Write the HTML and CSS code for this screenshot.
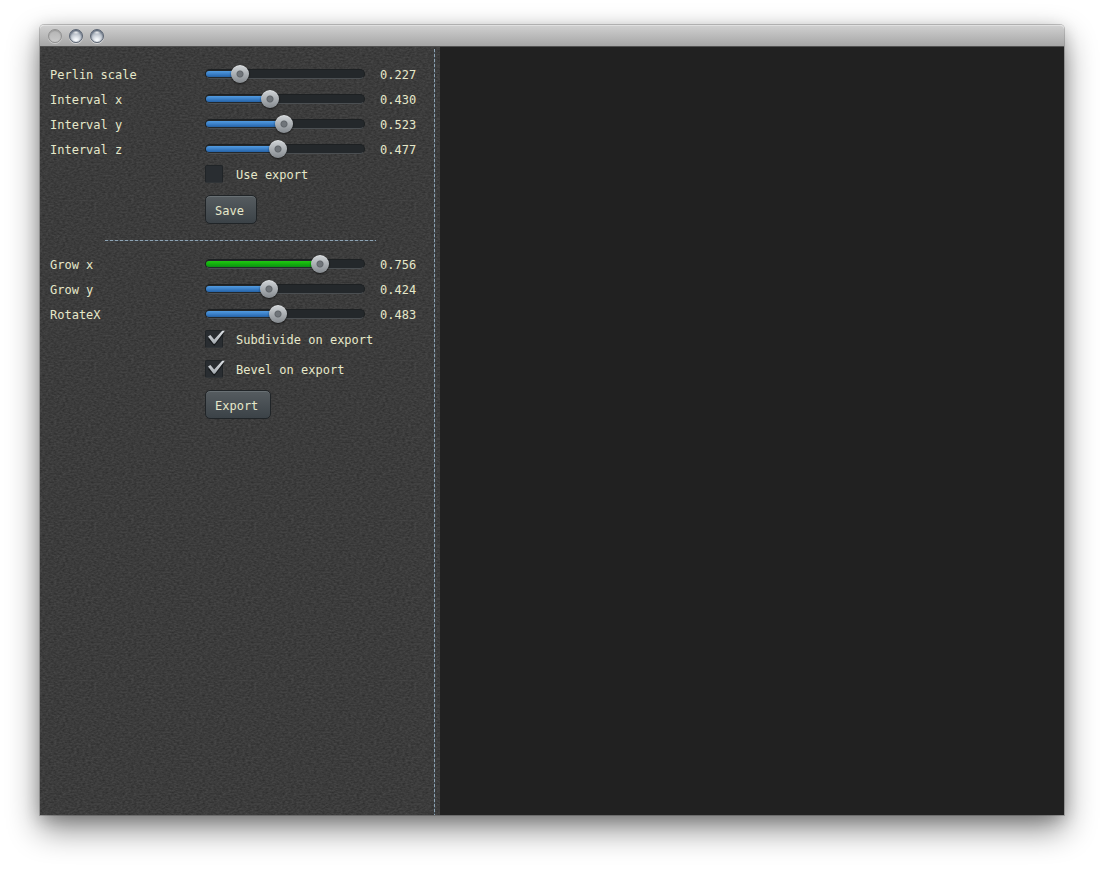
FILE: index.html
```html
<!DOCTYPE html>
<html lang="en">
<head>
<meta charset="utf-8">
<title>Export settings</title>
<link rel="stylesheet" href="styles.css">
</head>
<body>
<svg class="defs" aria-hidden="true">
  <defs>
    <linearGradient id="metal" x1="0" y1="0" x2="0" y2="1"><stop offset="0" stop-color="#dde1e5"/><stop offset="1" stop-color="#a3a9af"/></linearGradient>
    <symbol id="tick" viewBox="0 0 20 16"><path d="M4.200 7.200 9.200 12.600 17.800 1.800" fill="none" stroke="#15181a" stroke-width="3" transform="translate(0 1)"/><path d="M3 6.400 5.400 5 9.200 9.600 17.200.8 19.800.8 9.900 13.800 8.500 13.800Z" fill="url(#metal)"/></symbol>
  </defs>
</svg>
<div class="window">
  <header class="titlebar">
    <button class="light off" type="button" aria-label="Close"></button>
    <button class="light" type="button" aria-label="Minimize"></button>
    <button class="light" type="button" aria-label="Zoom"></button>
  </header>
  <div class="content">
    <aside class="panel">
      <form class="controls">
        <div class="row"><label for="perlin">Perlin scale</label><span class="slider" style="--value:0.227"><span class="fill"></span><input id="perlin" type="range" min="0" max="1" step="0.001" value="0.227"></span><output for="perlin">0.227</output></div>
        <div class="row"><label for="ix">Interval x</label><span class="slider" style="--value:0.430"><span class="fill"></span><input id="ix" type="range" min="0" max="1" step="0.001" value="0.430"></span><output for="ix">0.430</output></div>
        <div class="row"><label for="iy">Interval y</label><span class="slider" style="--value:0.523"><span class="fill"></span><input id="iy" type="range" min="0" max="1" step="0.001" value="0.523"></span><output for="iy">0.523</output></div>
        <div class="row"><label for="iz">Interval z</label><span class="slider" style="--value:0.477"><span class="fill"></span><input id="iz" type="range" min="0" max="1" step="0.001" value="0.477"></span><output for="iz">0.477</output></div>
        <div class="check"><span class="box"><input id="use" type="checkbox"><svg class="tick"><use href="#tick"/></svg></span><label for="use">Use export</label></div>
        <button class="action" type="button">Save</button>
        <hr class="divider">
        <div class="row"><label for="gx">Grow x</label><span class="slider active" style="--value:0.756"><span class="fill"></span><input id="gx" type="range" min="0" max="1" step="0.001" value="0.756"></span><output for="gx">0.756</output></div>
        <div class="row"><label for="gy">Grow y</label><span class="slider" style="--value:0.424"><span class="fill"></span><input id="gy" type="range" min="0" max="1" step="0.001" value="0.424"></span><output for="gy">0.424</output></div>
        <div class="row"><label for="rx">RotateX</label><span class="slider" style="--value:0.483"><span class="fill"></span><input id="rx" type="range" min="0" max="1" step="0.001" value="0.483"></span><output for="rx">0.483</output></div>
        <div class="check"><span class="box"><input id="sub" type="checkbox" checked><svg class="tick"><use href="#tick"/></svg></span><label for="sub">Subdivide on export</label></div>
        <div class="check spaced"><span class="box"><input id="bevel" type="checkbox" checked><svg class="tick"><use href="#tick"/></svg></span><label for="bevel">Bevel on export</label></div>
        <button class="action" type="button">Export</button>
      </form>
    </aside>
    <main class="viewport"></main>
  </div>
</div>
</body>
</html>
```

FILE: styles.css
```css
* { box-sizing: border-box; }
body {
  margin: 0;
  min-height: 100vh;
  padding: 25px 40px 55px;
  display: flex;
  background: #fff;
  font: 12px/22px "DejaVu Sans Mono", monospace;
  color: #e6e8ca;
}
.defs { position: absolute; width: 0; height: 0; }
.window {
  flex: 1;
  display: flex;
  flex-direction: column;
  border-radius: 4px 4px 0 0;
  box-shadow: 0 0 0 1px rgba(0, 0, 0, .2), 0 14px 32px rgba(0, 0, 0, .48), 0 4px 16px rgba(0, 0, 0, .2);
}
.titlebar {
  height: 22px;
  display: flex;
  align-items: center;
  gap: 7px;
  padding-left: 8px;
  border-radius: 4px 4px 0 0;
  border-top: 1px solid #e0e0e0;
  border-bottom: 1px solid #515151;
  background: linear-gradient(#cfcfcf, #a6a6a6);
}
.light {
  width: 14px;
  height: 14px;
  padding: 0;
  border: 1px solid #5b6472;
  border-radius: 50%;
  background: radial-gradient(ellipse 4px 2px at 50% 18%, #fff, transparent), radial-gradient(circle at 50% 85%, #f5f8fb 10%, #b4bbc5 60%, #7d8796);
  box-shadow: 0 1px 0 rgba(255, 255, 255, .5), inset 0 1px 2px #4f5b6c;
}
.light.off {
  border-color: #909090;
  background: linear-gradient(#b4b4b4, #c9c9c9);
  box-shadow: 0 1px 0 rgba(255, 255, 255, .4), inset 0 1px 1px #999;
}
.content { flex: 1; display: flex; }
.panel {
  flex: 0 0 400px;
  position: relative;
  padding: 15px 10px;
  background-color: #3c3c3c;
  background-image: url("data:image/svg+xml,%3Csvg xmlns='http://www.w3.org/2000/svg' width='160' height='160'%3E%3Cfilter id='n' x='0' y='0' width='100%25' height='100%25' color-interpolation-filters='sRGB'%3E%3CfeTurbulence type='fractalNoise' baseFrequency='.35 .6' numOctaves='2' stitchTiles='stitch'/%3E%3CfeColorMatrix values='.14 0 0 0 .165 .14 0 0 0 .165 .14 0 0 0 .165 0 0 0 0 1'/%3E%3C/filter%3E%3Crect width='160' height='160' filter='url(%23n)'/%3E%3C/svg%3E");
}
.panel::after {
  content: "";
  position: absolute;
  top: 2px;
  right: 5px;
  bottom: 0;
  width: 1px;
  background: repeating-linear-gradient(#8ea3b3 0 3px, #46515a 3px 5px);
}
.viewport { flex: 1; background: #212121; }
.controls { display: flex; flex-direction: column; }
.row {
  display: grid;
  grid-template-columns: 155px 160px 1fr;
  align-items: center;
  margin-bottom: 1px;
}
.row label, .row output, .check label { padding-top: 2px; }
.row output { padding-left: 15px; }
.slider {
  display: grid;
  grid-template-rows: 8px;
  align-items: center;
  height: 10px;
  border-radius: 5px;
  background: #24282b;
  border: 1px solid #1d2022;
  border-bottom-color: #4b4f52;
}
.slider > * { grid-area: 1 / 1; }
.fill {
  height: 6px;
  width: calc(152px * var(--value));
  border-radius: 3px 0 0 3px;
  background: linear-gradient(#529be0, #3b80c8 50%, #2562a6);
}
.active .fill { background: linear-gradient(#22c716, #12b00b 50%, #0d8d18); }
.slider input {
  appearance: none;
  width: 170px;
  height: 18px;
  margin: 0 -10px;
  background: none;
}
.slider input::-webkit-slider-thumb {
  appearance: none;
  width: 18px;
  height: 18px;
  border-radius: 50%;
  background: radial-gradient(circle, #70757a 0 2px, #60656a 3px, transparent 4px), linear-gradient(#d1d5d8, #84898e);
  box-shadow: 0 1px 2px rgba(0, 0, 0, .6), inset 0 1px 0 rgba(255, 255, 255, .3);
}
.check {
  display: flex;
  align-items: center;
  gap: 13px;
  padding-left: 155px;
}
.check.spaced { margin-top: 6px; }
.box { display: grid; width: 18px; height: 18px; }
.box input {
  grid-area: 1 / 1;
  appearance: none;
  width: 18px;
  height: 18px;
  margin: 0;
  border: 1px solid #202427;
  border-bottom-color: #303437;
  border-radius: 2px;
  background: #292d31;
}
.tick {
  grid-area: 1 / 1;
  width: 20px;
  height: 16px;
  visibility: hidden;
  pointer-events: none;
}
input:checked + .tick { visibility: visible; }
.action {
  align-self: flex-start;
  margin: 9px 0 0 155px;
  height: 29px;
  padding: 2px 12px 0 9px;
  border: 1px solid #202427;
  border-radius: 5px;
  background: linear-gradient(#565c60, #3b4247);
  box-shadow: inset 0 1px 0 #697074;
  font: inherit;
  color: inherit;
}
.divider {
  width: 271px;
  height: 1px;
  margin: 16px 0 11px 55px;
  border: 0;
  background: repeating-linear-gradient(90deg, #8ea3b3 0 3px, #46515a 3px 5px);
}
```
